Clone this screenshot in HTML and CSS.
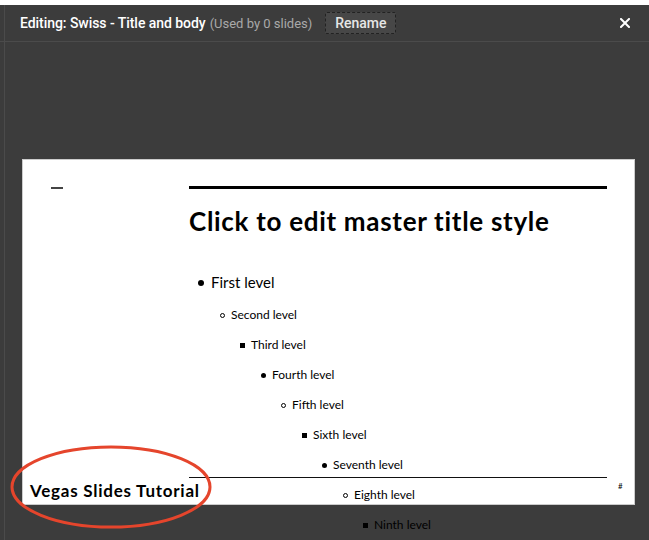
FILE: index.html
```html
<!DOCTYPE html>
<html lang="en">
<head>
<meta charset="utf-8">
<title>Editing master</title>
<link rel="stylesheet" href="styles.css">
</head>
<body>
<div class="topstrip"></div>
<div class="dialog">
  <header class="bar">
    <span class="heading">Editing: Swiss - Title and body</span>
    <span class="used">(Used by 0 slides)</span>
    <button class="rename" type="button">Rename</button>
    <span class="close" aria-label="Close">
      <svg width="10" height="10" viewBox="0 0 10 10"><path d="M1 1L9 9M9 1L1 9" stroke="#fff" stroke-width="2" stroke-linecap="square"/></svg>
    </span>
  </header>
  <div class="stage">
    <div class="slide">
      <div class="cols">
        <div class="side"><div class="dash"></div></div>
        <div class="main">
          <div class="rule"></div>
          <h1 class="title">Click to edit master title style</h1>
          <ul class="levels">
            <li class="lv l1"><span class="b disc"></span>First level</li>
            <li class="lv l2"><span class="b circ"></span>Second level</li>
            <li class="lv l3"><span class="b sq"></span>Third level</li>
            <li class="lv l4"><span class="b disc"></span>Fourth level</li>
            <li class="lv l5"><span class="b circ"></span>Fifth level</li>
            <li class="lv l6"><span class="b sq"></span>Sixth level</li>
            <li class="lv l7"><span class="b disc"></span>Seventh level</li>
            <li class="lv l8"><span class="b circ"></span>Eighth level</li>
            <li class="lv l9"><span class="b sq"></span>Ninth level</li>
          </ul>
        </div>
      </div>
      <div class="footer">
        <div class="foot-text">Vegas Slides Tutorial</div>
        <div class="foot-rule"></div>
        <div class="foot-num">#</div>
      </div>
    </div>
    <svg class="annot" width="210" height="90" viewBox="0 0 210 90">
      <ellipse cx="103" cy="44" rx="99" ry="40" fill="none" stroke="#e5452c" stroke-width="3"/>
    </svg>
  </div>
</div>
</body>
</html>
```

FILE: styles.css
```css
html, body {
  margin: 0;
  padding: 0;
  background: #3c3c3c;
  height: 540px;
  overflow: hidden;
}
.topstrip {
  height: 5px;
  background: #ffffff;
}
.dialog {
  height: 535px;
  background:
    linear-gradient(to right, transparent 4px, #4b4b4b 4px, #4b4b4b 5px, transparent 5px),
    #3c3c3c;
  font-family: Roboto, "Liberation Sans", sans-serif;
}
.bar {
  display: flex;
  align-items: center;
  height: 36px;
  padding: 0 19px 0 20px;
  border-bottom: 1px solid #4b4b4b;
}
.heading {
  color: #ffffff;
  font-size: 14px;
  font-weight: 500;
  letter-spacing: -0.05px;
}
.used {
  color: #a9a9a9;
  font-size: 13px;
  margin-left: 4px;
}
.rename {
  margin-left: 13px;
  width: 71px;
  height: 22px;
  padding: 0;
  background: #474747;
  border: 1px dashed #222222;
  border-radius: 2px;
  color: #e6e6e6;
  font-family: Roboto, "Liberation Sans", sans-serif;
  font-size: 14px;
  font-weight: 500;
}
.close {
  margin-left: auto;
  display: flex;
  width: 10px;
  height: 10px;
}
.stage {
  position: relative;
  padding: 117px 0 0 22px;
}
.slide {
  position: relative;
  box-sizing: border-box;
  width: 613px;
  height: 346px;
  background: #ffffff;
  border: 1px solid #cccccc;
  font-family: Lato, "Liberation Sans", sans-serif;
  color: #000000;
}
.cols {
  display: flex;
}
.side {
  width: 166px;
  flex: none;
}
.dash {
  margin: 27px 0 0 28px;
  width: 12px;
  height: 2px;
  background: #444444;
}
.main {
  width: 418px;
  flex: none;
}
.rule {
  margin-top: 26px;
  height: 3px;
  background: #000000;
}
.title {
  margin: 16px 0 0 0;
  font-family: Lato, "Liberation Sans", sans-serif;
  font-weight: 700;
  font-size: 26px;
  line-height: 32px;
  letter-spacing: 0.7px;
}
.levels {
  list-style: none;
  margin: 29px 0 0 0;
  padding: 0;
}
.lv {
  display: flex;
  align-items: center;
  font-size: 12px;
  line-height: 30px;
  height: 30px;
  white-space: nowrap;
}
.lv.l1 {
  font-size: 15px;
  line-height: 32px;
  height: 32px;
  margin-bottom: 2px;
  margin-left: 9px;
}
.l2 { margin-left: 31px; }
.l3 { margin-left: 51px; }
.l4 { margin-left: 72px; }
.l5 { margin-left: 92px; }
.l6 { margin-left: 113px; }
.l7 { margin-left: 133px; }
.l8 { margin-left: 154px; }
.l9 { margin-left: 174px; }
.b {
  flex: none;
  box-sizing: border-box;
  width: 5px;
  height: 5px;
  margin-right: 6px;
  margin-top: 1px;
}
.l1 .b { width: 6px; height: 6px; margin-right: 7px; }
.disc { border-radius: 50%; background: #000; }
.circ { border-radius: 50%; border: 1px solid #000; }
.sq { background: #000; }
.footer {
  position: absolute;
  left: 0;
  right: 0;
  bottom: 0;
  height: 27px;
  display: flex;
}
.foot-text {
  width: 159px;
  padding-left: 7px;
  font-weight: 700;
  font-size: 17px;
  line-height: 27px;
  letter-spacing: 0.75px;
  white-space: nowrap;
}
.foot-rule {
  width: 418px;
  border-top: 1px solid #111111;
}
.foot-num {
  margin: 5px 0 0 11px;
  font-size: 8px;
  line-height: 8px;
}
.annot {
  position: absolute;
  left: 8px;
  top: 401px;
}
```
